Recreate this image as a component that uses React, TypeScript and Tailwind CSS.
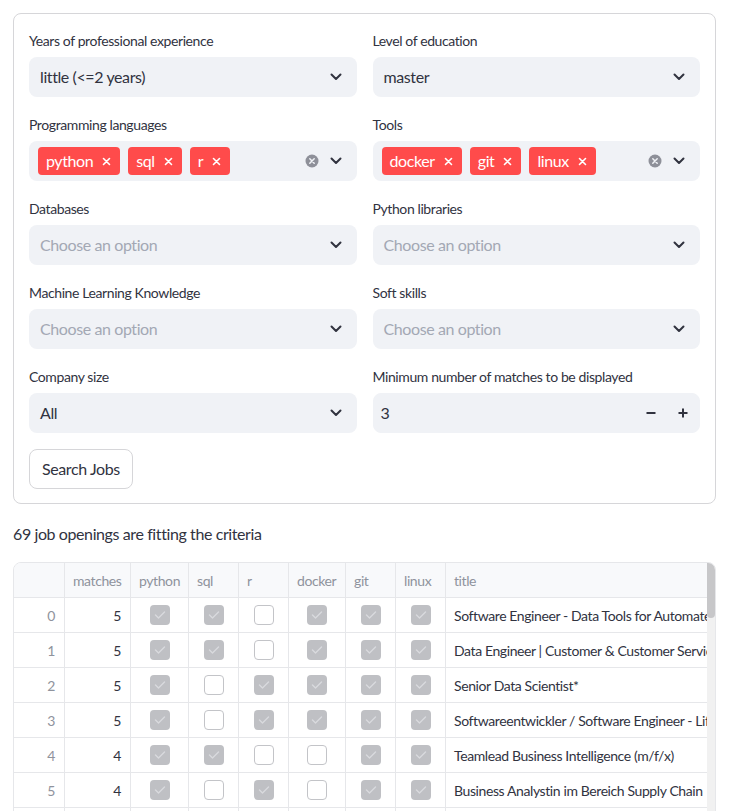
import React from "react";

const font = { fontFamily: '"Source Sans Pro", Lato, "Noto Sans", sans-serif', letterSpacing: "-0.025em" };

function Chevron() {
  return (
    <svg width="12" height="8" viewBox="0 0 12 8" fill="none">
      <path d="M1.5 1.5 L6 6 L10.5 1.5" stroke="#31333f" strokeWidth="2" strokeLinecap="round" strokeLinejoin="round" />
    </svg>
  );
}

function ClearIcon() {
  return (
    <svg width="14" height="14" viewBox="0 0 14 14">
      <circle cx="7" cy="7" r="6.5" fill="#8e9099" />
      <path d="M4.8 4.8 L9.2 9.2 M9.2 4.8 L4.8 9.2" stroke="#f0f2f6" strokeWidth="1.5" strokeLinecap="round" />
    </svg>
  );
}

function TagX() {
  return (
    <svg width="9" height="9" viewBox="0 0 9 9">
      <path d="M1.5 1.5 L7.5 7.5 M7.5 1.5 L1.5 7.5" stroke="#ffffff" strokeWidth="1.6" strokeLinecap="round" />
    </svg>
  );
}

function Label({ children }: { children: React.ReactNode }) {
  return <div className="h-[28px] pb-1 flex items-center text-[14px] text-[#31333f] leading-none">{children}</div>;
}

function Select({ value, placeholder }: { value?: string; placeholder?: string }) {
  return (
    <div className="h-[40px] rounded-lg bg-[#f0f2f6] flex items-center pl-[11px] pr-[15px]">
      <span className={"flex-1 text-[16px] " + (value ? "text-[#31333f]" : "text-[#a3a8b4]")}>{value ?? placeholder}</span>
      <Chevron />
    </div>
  );
}

function Multi({ tags }: { tags: string[] }) {
  return (
    <div className="h-[40px] rounded-lg bg-[#f0f2f6] flex items-center pl-[9px] pr-[15px]">
      <div className="flex-1 flex gap-2">
        {tags.map((t) => (
          <span key={t} className="h-[28px] rounded-[4px] bg-[#ff4b4b] text-white text-[16px] flex items-center pl-[8px] pr-[9px] gap-[9px]">
            {t}
            <TagX />
          </span>
        ))}
      </div>
      <div className="flex items-center gap-[11px]">
        <ClearIcon />
        <Chevron />
      </div>
    </div>
  );
}

function Field({ label, children }: { label: string; children: React.ReactNode }) {
  return (
    <div className="flex flex-col min-w-0">
      <Label>{label}</Label>
      {children}
    </div>
  );
}

function Check({ on }: { on: boolean }) {
  if (on)
    return (
      <div className="w-[20px] h-[20px] rounded-[4px] bg-[#bfc0c4] flex items-center justify-center">
        <svg width="12" height="10" viewBox="0 0 12 10" fill="none">
          <path d="M1.5 5 L4.5 8 L10.5 2" stroke="#d9dadd" strokeWidth="1.4" strokeLinecap="round" strokeLinejoin="round" />
        </svg>
      </div>
    );
  return <div className="w-[20px] h-[20px] rounded-[4px] bg-white border border-[#c3c4c8]" />;
}

const rows: { m: number; c: boolean[]; t: string }[] = [
  { m: 5, c: [true, true, false, true, true, true], t: "Software Engineer - Data Tools for Automated Driving" },
  { m: 5, c: [true, true, false, true, true, true], t: "Data Engineer | Customer & Customer Service Analytics" },
  { m: 5, c: [true, false, true, true, true, true], t: "Senior Data Scientist*" },
  { m: 5, c: [true, false, true, true, true, true], t: "Softwareentwickler / Software Engineer - Life Science" },
  { m: 4, c: [true, true, false, false, true, true], t: "Teamlead Business Intelligence (m/f/x)" },
  { m: 4, c: [true, false, true, false, true, true], t: "Business Analystin im Bereich Supply Chain" },
  { m: 4, c: [true, false, false, true, true, true], t: "Data Scientist (m/w/d)" },
];

const cols = "grid grid-cols-[51px_66px_58px_50px_50px_57px_50px_50px_1fr]";
const headers = ["", "matches", "python", "sql", "r", "docker", "git", "linux", "title"];

export default function App() {
  return (
    <div style={font} className="bg-white h-[811px] overflow-hidden pl-[13px] pt-[13px] text-[#31333f]">
      <div className="w-[703px]">
        <div className="border border-[#d6d6d9] rounded-lg px-[15px] pt-[15px] pb-[14px] flex flex-col gap-4">
          <div className="grid grid-cols-2 gap-x-4 gap-y-4">
            <Field label="Years of professional experience"><Select value="little (<=2 years)" /></Field>
            <Field label="Level of education"><Select value="master" /></Field>
            <Field label="Programming languages"><Multi tags={["python", "sql", "r"]} /></Field>
            <Field label="Tools"><Multi tags={["docker", "git", "linux"]} /></Field>
            <Field label="Databases"><Select placeholder="Choose an option" /></Field>
            <Field label="Python libraries"><Select placeholder="Choose an option" /></Field>
            <Field label="Machine Learning Knowledge"><Select placeholder="Choose an option" /></Field>
            <Field label="Soft skills"><Select placeholder="Choose an option" /></Field>
            <Field label="Company size"><Select value="All" /></Field>
            <Field label="Minimum number of matches to be displayed">
              <div className="h-[40px] rounded-lg bg-[#f0f2f6] border border-[#f0f2f6] flex items-center pl-[7px]">
                <span className="flex-1 text-[16px]">3</span>
                <div className="w-[32px] flex justify-center">
                  <svg width="10" height="10" viewBox="0 0 10 10"><path d="M0.5 5 H9.5" stroke="#31333f" strokeWidth="2" /></svg>
                </div>
                <div className="w-[32px] flex justify-center">
                  <svg width="10" height="10" viewBox="0 0 10 10"><path d="M0.5 5 H9.5 M5 0.5 V9.5" stroke="#31333f" strokeWidth="2" /></svg>
                </div>
              </div>
            </Field>
          </div>
          <div>
            <button className="h-[40px] px-[12px] rounded-lg border border-[#d6d6d9] bg-white text-[16px] text-[#31333f]">Search Jobs</button>
          </div>
        </div>

        <p className="mt-[18px] text-[16px] leading-[24px] text-[#31333f]">69 job openings are fitting the criteria</p>

        <div className="mt-[16px] h-[400px] border border-[#e6e7ea] rounded-lg overflow-hidden flex">
          <div className="flex-1 min-w-0">
            <div className={cols + " h-[35px] bg-[#f8f9fb] border-b border-[#e6e7ea]"}>
              {headers.map((h, i) => (
                <div key={i} className={"flex items-center px-[8px] text-[14px] text-[#8f939d] whitespace-nowrap overflow-hidden " + (i < 8 ? "border-r border-[#e6e7ea]" : "")}>
                  {h}
                </div>
              ))}
            </div>
            {rows.map((r, ri) => (
              <div key={ri} className={cols + " h-[35px] border-b border-[#e6e7ea]"}>
                <div className="flex items-center justify-end px-[9px] text-[14px] text-[#8f939d] border-r border-[#e6e7ea]">{ri}</div>
                <div className="flex items-center justify-end px-[9px] text-[14px] text-[#31333f] border-r border-[#e6e7ea]">{r.m}</div>
                {r.c.map((v, ci) => (
                  <div key={ci} className="flex items-center justify-center border-r border-[#e6e7ea]">
                    <Check on={v} />
                  </div>
                ))}
                <div className="flex items-center px-[8px] text-[14px] text-[#31333f] whitespace-nowrap overflow-hidden">{r.t}</div>
              </div>
            ))}
          </div>
          <div className="w-[8px] bg-[#f1f1f1] flex flex-col">
            <div className="h-[55px] bg-[#c7c7c9] rounded-b-sm" />
          </div>
        </div>
      </div>
    </div>
  );
}
